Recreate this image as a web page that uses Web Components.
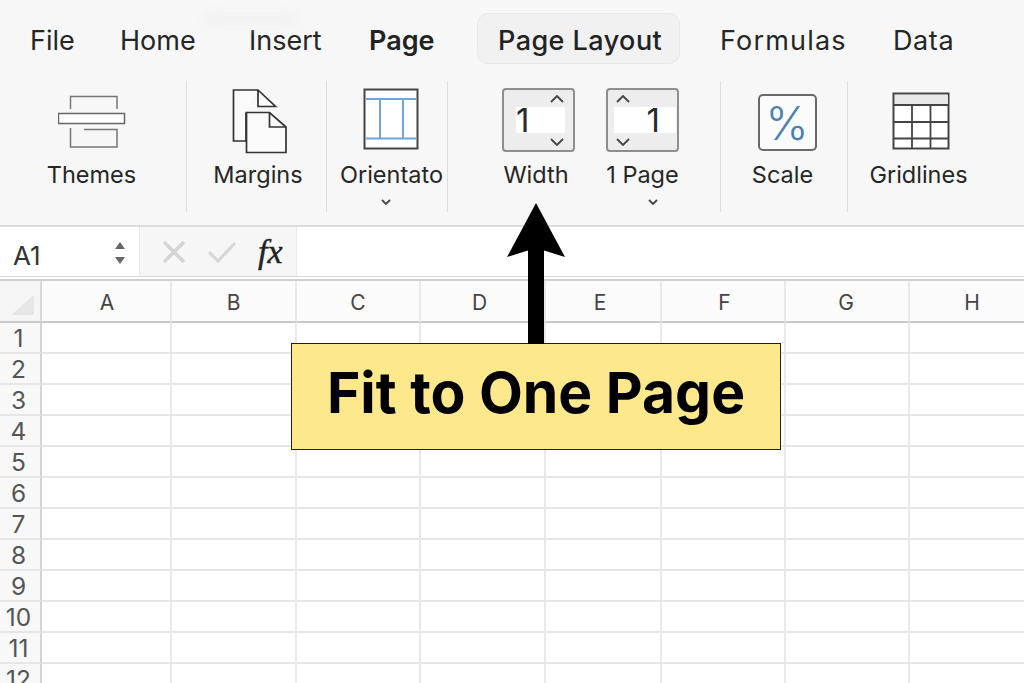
<!DOCTYPE html>
<html>
<head>
<meta charset="utf-8">
<style>
  html, body { margin: 0; height: 100%; overflow: hidden; background: #fff; }
  body { position: relative; width: 1024px; height: 683px; font-family: Inter, "Noto Sans", sans-serif; color: #222; }
</style>
</head>
<body>
<x-ribbon>
  <x-tab slot="tabs" style="width:90px">File</x-tab>
  <x-tab slot="tabs" style="width:129px">Home</x-tab>
  <x-tab slot="tabs" style="width:120px">Insert</x-tab>
  <x-tab slot="tabs" style="width:108px" strong>Page</x-tab>
  <x-tab slot="tabs" style="letter-spacing:.45px" active>Page Layout</x-tab>
  <x-tab slot="tabs" style="width:173px;margin-left:40px;letter-spacing:1.2px">Formulas</x-tab>
  <x-tab slot="tabs" style="letter-spacing:.6px">Data</x-tab>

  <x-group style="width:186px;padding-right:3px;border-left:0">
    <x-tool label="Themes">
      <svg width="68" height="78" viewBox="58 81 68 78" fill="none">
        <path d="M70.500 109V96.500H117V109" stroke="#777" stroke-width="1.500"/>
        <rect x="58.500" y="113.500" width="66" height="10" fill="#fff" stroke="#666" stroke-width="1.500"/>
        <path d="M84 129.500H117V147H70.500V128" stroke="#777" stroke-width="1.500"/>
      </svg>
    </x-tool>
  </x-group>
  <x-group style="width:140px;padding-left:3px">
    <x-tool label="Margins">
      <svg style="margin-left:4px" width="56" height="78" viewBox="233 81 56 78" fill="none">
        <path d="M247 112.500V141H234.500V90H259L276.500 106.500H259V90" fill="#fafafa" stroke="#333" stroke-width="1.700"/>
        <path d="M247.500 112.500H270.500L287 127V152.500H247.500Z" fill="#fafafa" stroke="#333" stroke-width="1.700"/>
        <path d="M270.500 112.500V127H287" stroke="#333" stroke-width="1.700"/>
      </svg>
    </x-tool>
  </x-group>
  <x-group style="width:121px;padding-left:9px">
    <x-tool label="Orientato" chevron="-5">
      <svg width="56" height="78" viewBox="362 81 56 78" fill="none">
        <rect x="363.500" y="89.500" width="53" height="59" fill="#fff" stroke="#444" stroke-width="2"/>
        <path d="M365 99H415M365 138.500H415M379 99V138.500M402 99V138.500" stroke="#6fa5d8" stroke-width="2"/>
      </svg>
    </x-tool>
  </x-group>
  <x-group style="width:273px;padding-left:54px;justify-content:flex-start;gap:31px">
    <x-tool label="Width" style="width:73px;--label-nudge:5px">
      <x-spin value="1"></x-spin>
    </x-tool>
    <x-tool label="1 Page" chevron="10" style="width:73px">
      <x-spin value="1" flip></x-spin>
    </x-tool>
  </x-group>
  <x-group style="width:127px">
    <x-tool label="Scale" style="--label-nudge:3px">
      <x-percent></x-percent>
    </x-tool>
  </x-group>
  <x-group style="width:177px;padding-right:35px">
    <x-tool label="Gridlines">
      <svg style="margin-left:5px" width="58" height="78" viewBox="892 81 58 78" fill="none">
        <rect x="893.500" y="93.500" width="55" height="55" fill="#fff" stroke="#444" stroke-width="2"/>
        <rect x="895" y="95" width="53" height="9" fill="#e8e8e8"/>
        <path d="M894 105H948M894 122H948M894 138.500H948M912 105V148M930.500 105V148" stroke="#444" stroke-width="1.800"/>
      </svg>
    </x-tool>
  </x-group>
</x-ribbon>
<x-formula-bar cell="A1"></x-formula-bar>
<x-sheet></x-sheet>
<x-callout>Fit to One Page</x-callout>

<script>
class XRibbon extends HTMLElement {
  constructor() {
    super();
    this.attachShadow({ mode: "open" }).innerHTML = `
      <style>
        :host { display: block; box-sizing: border-box; height: 227px; background: #f7f7f7; border-bottom: 2px solid #dcdcdc; position: relative; }
        .tabs { display: flex; align-items: center; height: 51px; padding: 13px 0 17px 30px; }
        .groups { display: flex; height: 131px; }
        .smudge { position: absolute; left: 204px; top: 12px; width: 94px; height: 14px; background: #f2f2f2; border-radius: 8px; filter: blur(4px); }
      </style>
      <div class="smudge"></div>
      <div class="tabs"><slot name="tabs"></slot></div>
      <div class="groups"><slot></slot></div>
    `;
  }
}

class XTab extends HTMLElement {
  constructor() {
    super();
    this.attachShadow({ mode: "open" }).innerHTML = `
      <style>
        :host { display: block; flex: none; box-sizing: border-box; font-size: 27px; line-height: 55px; height: 51px; color: #262626; white-space: nowrap; }
        :host([strong]) { font-weight: 600; color: #222; }
        :host([active]) { font-weight: 500; color: #222; padding-left: 20px; background: #f1f1f1; width: 203px; border: 1px solid #e8e8e8; border-radius: 11px; line-height: 53px; }
      </style>
      <slot></slot>
    `;
  }
}

class XGroup extends HTMLElement {
  constructor() {
    super();
    this.attachShadow({ mode: "open" }).innerHTML = `
      <style>
        :host { display: flex; justify-content: center; box-sizing: border-box; height: 131px; border-left: 1px solid #dedede; }
      </style>
      <slot></slot>
    `;
  }
}

// icon on top, label below, optional chevron under the label
class XTool extends HTMLElement {
  constructor() {
    super();
    const label = this.getAttribute("label") || "";
    const chevron = this.getAttribute("chevron");
    this.attachShadow({ mode: "open" }).innerHTML = `
      <style>
        :host { display: flex; flex-direction: column; align-items: center; }
        .icon { height: 78px; display: flex; align-items: center; justify-content: center; }
        .label { font-size: 23.500px; line-height: 30px; margin-top: 1px; margin-right: var(--label-nudge, 0); color: #262626; white-space: nowrap; }
        svg { display: block; margin-top: 8px; }
      </style>
      <div class="icon"><slot></slot></div>
      <div class="label">${label}</div>
      ${chevron !== null ? `<svg width="12" height="9" viewBox="0 0 12 9" fill="none" style="transform:translateX(${chevron}px)"><path d="M2 2l4 4 4-4" stroke="#444" stroke-width="1.800"/></svg>` : ""}
    `;
  }
}

class XSpin extends HTMLElement {
  constructor() {
    super();
    const flip = this.hasAttribute("flip");
    const value = this.getAttribute("value") || "";
    const up = `<svg width="14" height="8" viewBox="0 0 14 8" fill="none"><path d="M1 7l6-6 6 6" stroke="#444" stroke-width="1.800"/></svg>`;
    const down = `<svg width="14" height="8" viewBox="0 0 14 8" fill="none"><path d="M1 1l6 6 6-6" stroke="#444" stroke-width="1.800"/></svg>`;
    this.attachShadow({ mode: "open" }).innerHTML = `
      <style>
        :host { display: flex; flex-direction: column; box-sizing: border-box; width: 73px; height: 64px; background: #ededed; border: 2px solid #8e8e8e; border-radius: 4px; }
        .arrow { height: 18px; display: flex; align-items: center; padding: ${flip ? "0 0 0 8px" : "0 0 0 46px"}; }
        .box { height: 26px; background: #fff; margin: ${flip ? "0 1px 0 6px" : "0 8px 0 12px"}; display: flex; align-items: center; justify-content: ${flip ? "flex-end" : "flex-start"}; font-size: 33px; line-height: 30px; color: #2a2a2a; padding: ${flip ? "0 16px 0 0" : "0"}; }
        svg { display: block; }
      </style>
      <div class="arrow">${up}</div>
      <div class="box">${value}</div>
      <div class="arrow">${down}</div>
    `;
  }
}

class XPercent extends HTMLElement {
  constructor() {
    super();
    this.attachShadow({ mode: "open" }).innerHTML = `
      <style>
        :host { display: flex; align-items: center; justify-content: center; box-sizing: border-box; width: 59px; height: 57px; margin: 4px 0 0 6px; padding-top: 2px; background: #fbfbfb; border: 2px solid #6a6a6a; border-radius: 5px; font-weight: 300; font-size: 46px; line-height: 1; color: #4a82ad; }
      </style>
      %
    `;
  }
}

class XFormulaBar extends HTMLElement {
  constructor() {
    super();
    const cell = this.getAttribute("cell") || "";
    this.attachShadow({ mode: "open" }).innerHTML = `
      <style>
        :host { display: flex; box-sizing: border-box; height: 50px; border-bottom: 1px solid #d8d8d8; background: #fff; }
        .name { width: 139px; display: flex; align-items: center; justify-content: space-between; box-sizing: border-box; padding: 3px 14px 0 13px; font-size: 26px; color: #333; }
        .name span { padding-top: 4px; }
        .tools { width: 158px; box-sizing: border-box; background: #f6f6f6; border-left: 1px solid #e8e8e8; border-right: 1px solid #e8e8e8; display: flex; align-items: center; padding-left: 22px; }
        .fx { font-family: "Liberation Serif", serif; font-style: italic; font-size: 34px; color: #222; margin-left: 21px; line-height: 1; -webkit-text-stroke: 0.4px #222; }
        svg { display: block; }
        .step { margin-right: -1px; }
      </style>
      <div class="name"><span>${cell}</span>
        <svg class="step" width="12" height="24" viewBox="0 0 12 24"><path d="M6 1l5 7H1zM6 23l5-7H1z" fill="#666"/></svg>
      </div>
      <div class="tools">
        <svg width="24" height="24" viewBox="0 0 24 24" fill="none"><path d="M2 2l20 20M22 2L2 22" stroke="#d4d4d4" stroke-width="3.500"/></svg>
        <svg style="margin-left:21px" width="30" height="24" viewBox="0 0 30 24" fill="none"><path d="M2 12l9 9L28 3" stroke="#d6d6d6" stroke-width="3"/></svg>
        <span class="fx">fx</span>
      </div>
    `;
  }
}

class XSheet extends HTMLElement {
  constructor() {
    super();
    const root = this.attachShadow({ mode: "open" });
    const cols = ["A", "B", "C", "D", "E", "F", "G", "H"];
    // the letters are not quite centred over their columns
    const nudge = { A: [2, 0], D: [0, 6], E: [0, 6], F: [3, 0], G: [0, 2], H: [2, 0] };
    const cells = [];
    cells.push(`<div class="corner"><svg width="40" height="40" viewBox="0 0 40 40"><path d="M11 34L34 14V34Z" fill="#e6e6e6"/></svg></div>`);
    cols.forEach(c => {
      const [l, r] = nudge[c] || [0, 0];
      cells.push(`<div class="col" style="padding-left:${l}px;padding-right:${r}px">${c}</div>`);
    });
    for (let r = 1; r <= 12; r++) {
      cells.push(`<div class="row">${r}</div>`);
      cols.forEach(() => cells.push(`<div class="cell"></div>`));
    }
    root.innerHTML = `
      <style>
        :host { display: block; margin-top: 2px; height: 404px; box-sizing: border-box; border-top: 2px solid #cfcfcf; overflow: hidden; background: #fff; }
        .grid { display: grid; grid-template-columns: 42px 130px 125px 124px 125px 116px 124px 124px 124px; grid-template-rows: 42px repeat(12, 31px); }
        .grid > div { box-sizing: border-box; border-right: 2px solid #e9e9e9; border-bottom: 2px solid #e6e6e6; }
        .corner { background: #f5f5f5; border-right-color: #d8d8d8 !important; border-bottom-color: #c9c9c9 !important; }
        .corner svg { display: block; }
        .col { background: #fbfbfb; border-bottom-color: #c9c9c9 !important; display: flex; align-items: center; justify-content: center; padding-top: 2px; font-size: 21px; color: #444; }
        .row { background: #f8f8f8; border-right-color: #d4d4d4 !important; display: flex; align-items: center; justify-content: center; padding-right: 3px; padding-top: 1px; font-size: 24.500px; color: #555; }
      </style>
      <div class="grid">${cells.join("")}</div>
    `;
  }
}

class XCallout extends HTMLElement {
  constructor() {
    super();
    this.attachShadow({ mode: "open" }).innerHTML = `
      <style>
        :host { position: absolute; left: 291px; top: 343px; width: 490px; height: 107px; box-sizing: border-box; background: #fde98c; border: 1.500px solid #1e1e1e; padding-bottom: 9px; display: flex; align-items: center; justify-content: center; font-weight: 700; font-size: 57px; color: #000; }
        svg { position: absolute; left: 214px; top: -142px; }
      </style>
      <svg width="60" height="142" viewBox="506 202 60 142"><path d="M536 203L565 257L544 250.500V344H528V250.500L507 257Z" fill="#000"/></svg>
      <slot></slot>
    `;
  }
}

customElements.define("x-ribbon", XRibbon);
customElements.define("x-tab", XTab);
customElements.define("x-group", XGroup);
customElements.define("x-tool", XTool);
customElements.define("x-spin", XSpin);
customElements.define("x-percent", XPercent);
customElements.define("x-formula-bar", XFormulaBar);
customElements.define("x-sheet", XSheet);
customElements.define("x-callout", XCallout);
</script>
</body>
</html>
